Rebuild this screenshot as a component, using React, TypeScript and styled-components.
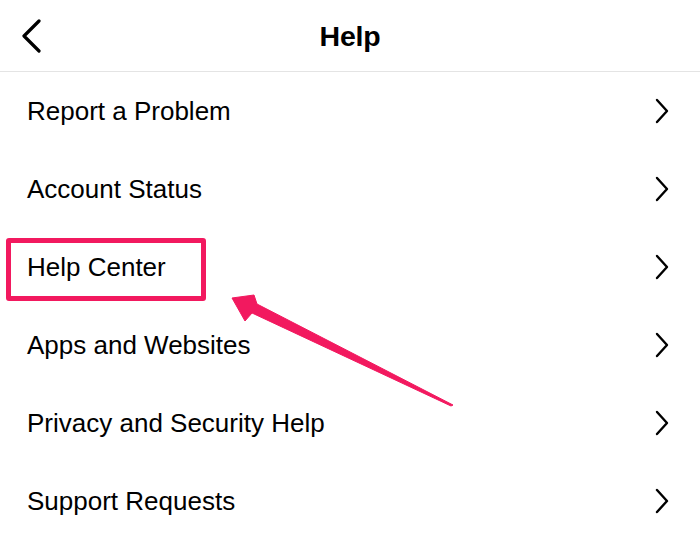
import React from "react";
import styled, { createGlobalStyle } from "styled-components";

const Global = createGlobalStyle`
  html, body { margin: 0; padding: 0; background: #ffffff; }
  body { font-family: "Liberation Sans", Arial, sans-serif; color: #000; }
`;

const Screen = styled.div`
  position: relative;
  width: 700px;
  height: 547px;
  overflow: hidden;
  background: #fff;
`;

const Header = styled.header`
  height: 71px;
  border-bottom: 1px solid #e4e4e4;
  display: grid;
  grid-template-columns: 80px 1fr 80px;
  align-items: center;
`;

const BackButton = styled.div`
  display: flex;
  align-items: center;
  padding-left: 20px;
  height: 100%;
`;

const Title = styled.h1`
  margin: 0;
  text-align: center;
  font-size: 28.5px;
  font-weight: 700;
  letter-spacing: -0.2px;
  line-height: 1;
  padding-top: 2px;
`;

const List = styled.ul`
  list-style: none;
  margin: 0;
  padding: 0;
`;

const Row = styled.li`
  height: 78px;
  display: flex;
  align-items: center;
  justify-content: space-between;
  padding: 0 31px 0 27px;
  font-size: 26px;
`;

const Label = styled.span`
  line-height: 1;
`;

const Highlight = styled.div`
  position: absolute;
  left: 6px;
  top: 238px;
  width: 200px;
  height: 63px;
  box-sizing: border-box;
  border: 5px solid #f2195f;
  border-radius: 3px;
  pointer-events: none;
`;

const Overlay = styled.svg`
  position: absolute;
  left: 0;
  top: 0;
  pointer-events: none;
`;

const Chevron = ({ dir }: { dir: "left" | "right" }) =>
  dir === "left" ? (
    <svg width="22" height="34" viewBox="0 0 22 34">
      <path d="M19 2 L4 17 L19 32" fill="none" stroke="#000" strokeWidth="3.2" strokeLinecap="round" strokeLinejoin="round" />
    </svg>
  ) : (
    <svg width="14" height="26" viewBox="0 0 14 26">
      <path d="M2 2 L12 13 L2 24" fill="none" stroke="#000" strokeWidth="2.4" strokeLinecap="round" strokeLinejoin="round" />
    </svg>
  );

const items = [
  "Report a Problem",
  "Account Status",
  "Help Center",
  "Apps and Websites",
  "Privacy and Security Help",
  "Support Requests",
];

export default function App() {
  return (
    <Screen>
      <Global />
      <Header>
        <BackButton>
          <Chevron dir="left" />
        </BackButton>
        <Title>Help</Title>
        <div />
      </Header>
      <List>
        {items.map((t) => (
          <Row key={t}>
            <Label>{t}</Label>
            <Chevron dir="right" />
          </Row>
        ))}
      </List>
      <Highlight />
      <Overlay width="700" height="547" viewBox="0 0 700 547">
        <path
          d="M232 298 L254 295 L257 304 L453 405 L451 406 L252 313 L245 321 Z"
          fill="#f2195f"
          stroke="#f2195f"
          strokeWidth="1"
          strokeLinejoin="round"
        />
      </Overlay>
    </Screen>
  );
}
